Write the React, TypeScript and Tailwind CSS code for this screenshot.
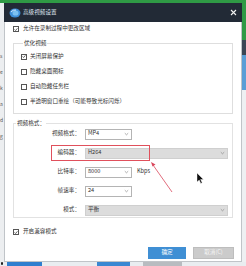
import React from 'react';

const font = { fontFamily: '"Noto Sans CJK SC", "Noto Sans", sans-serif' };

function Check({ checked }: { checked?: boolean }) {
    return (
        <span className="flex h-[6px] w-[6px] shrink-0 items-center justify-center border-[0.8px] border-[#555] bg-white">
            {checked && (
                <svg width="5" height="5" viewBox="0 0 5 5">
                    <path d="M0.7 2.4 L2 3.8 L4.3 1" fill="none" stroke="#333" strokeWidth="0.9" />
                </svg>
            )}
        </span>
    );
}

function CheckRow({ label, checked }: { label: string; checked?: boolean }) {
    return (
        <div className="flex h-[15px] items-center gap-[3px]">
            <Check checked={checked} />
            <span className="text-[5.6px] leading-none text-[#333]">{label}</span>
        </div>
    );
}

function Select({ value, width, muted }: { value: string; width: string; muted?: boolean }) {
    return (
        <div
            className={`flex h-[11px] items-center justify-between border-[0.8px] pr-[2px] pl-[2px] ${width} ${
                muted ? 'border-[#cfcfcf] bg-[#dcdcdc]' : 'border-[#b4b4b4] bg-white'
            }`}
        >
            <span className="text-[5.6px] leading-none text-[#333]">{value}</span>
            <svg width="5" height="4" viewBox="0 0 5 4">
                <path d="M0.8 1.2 L2.5 2.8 L4.2 1.2" fill="none" stroke="#8a8a8a" strokeWidth="0.7" />
            </svg>
        </div>
    );
}

function FieldRow({ label, children }: { label: string; children: React.ReactNode }) {
    return (
        <div className="relative flex h-[12px] items-center">
            <span className="w-[66px] text-right text-[5.6px] leading-none text-[#333]">{label}</span>
            <div className="ml-[5px] flex items-center">{children}</div>
        </div>
    );
}

export default function App() {
    return (
        <div className="relative flex h-[266px] w-[246px] flex-col overflow-hidden bg-[#e6e9ec]" style={font}>
            <div className="flex h-[262px]">
                {/* left strip */}
                <div className="flex w-[4px] flex-col">
                    <div className="h-[3px] bg-[#2f9a45]" />
                    <div className="flex flex-1 flex-col gap-[11px] bg-[#eceef0] pt-[50px] text-[5px] leading-none text-[#555]">
                        <span>s</span>
                        <span>e</span>
                        <span>k</span>
                        <span>a</span>
                        <span>d</span>
                        <span>g</span>
                    </div>
                </div>

                {/* dialog */}
                <div className="flex w-[238px] flex-col">
                    <div className="h-[3px] bg-[#2f9a45]" />
                    <div className="flex h-[19px] items-center bg-[#222a36] pr-[5px] pl-[5px]">
                        <svg width="12" height="10" viewBox="0 0 12 10">
                            <ellipse cx="6" cy="5" rx="5.5" ry="4.5" fill="#3f8fd8" />
                            <ellipse cx="6.5" cy="5" rx="3" ry="2.6" fill="#7cc0f0" />
                            <path d="M2 4 Q4 1.5 7 2" fill="none" stroke="#e8f4ff" strokeWidth="0.9" />
                        </svg>
                        <span className="ml-[2px] text-[5.6px] leading-none text-[#dfe5ee]">高级视频设置</span>
                        <svg className="ml-auto" width="7" height="7" viewBox="0 0 7 7">
                            <path d="M1 1 L6 6 M6 1 L1 6" stroke="#f2f2f2" strokeWidth="1.1" />
                        </svg>
                    </div>

                    <div className="flex h-[240px] flex-col border-x-[0.8px] border-b-[0.8px] border-[#c0c4c8] bg-white pt-[2px]">
                        <div className="flex h-[10px] items-center gap-[4px] pl-[8px]">
                            <Check checked />
                            <span className="text-[5.6px] leading-none text-[#333]">允许在录制过程中更改区域</span>
                        </div>

                        <fieldset className="mx-[8px] mt-[5px] border-[0.8px] border-[#dedede] pb-[4px] pl-[7px]">
                            <legend className="ml-[2px] px-[1px] text-[5.6px] leading-[8px] text-[#333]">优化视频</legend>
                            <div className="pt-[2px]">
                                <CheckRow label="关闭屏幕保护" checked />
                                <CheckRow label="隐藏桌面图标" />
                                <CheckRow label="自动隐藏任务栏" />
                                <CheckRow label="半透明窗口重绘（可能导致光标闪烁）" />
                            </div>
                        </fieldset>

                        <fieldset className="mx-[8px] mt-[5px] border-[0.8px] border-[#e2e2e2] pb-[1px]">
                            <legend className="ml-[2px] px-[1px] text-[5.6px] leading-[8px] text-[#333]">视频格式：</legend>
                            <div className="flex flex-col gap-[7px] pt-[1px]">
                                <FieldRow label="视频格式：">
                                    <Select value="MP4" width="w-[47px]" />
                                </FieldRow>
                                <FieldRow label="编码器：">
                                    <Select value="H264" width="w-[143px]" muted />
                                    <div className="absolute top-[-2px] left-[37px] h-[16px] w-[99px] border-[0.8px] border-[#e0505c]" />
                                </FieldRow>
                                <FieldRow label="比特率：">
                                    <Select value="8000" width="w-[47px]" />
                                    <span className="ml-[5px] text-[5.6px] leading-none text-[#333]">Kbps</span>
                                </FieldRow>
                                <FieldRow label="帧速率：">
                                    <Select value="24" width="w-[47px]" />
                                </FieldRow>
                                <FieldRow label="模式：">
                                    <Select value="平衡" width="w-[143px]" muted />
                                </FieldRow>
                            </div>
                        </fieldset>

                        <div className="mt-[9px] flex h-[10px] items-center gap-[4px] pl-[8px]">
                            <Check checked />
                            <span className="text-[5.6px] leading-none text-[#333]">开启兼容模式</span>
                        </div>

                        <div className="mt-[10px] flex justify-end gap-[7px] pr-[7px]">
                            <div className="flex h-[12px] w-[38px] items-center justify-center bg-[#3f8fd4] text-[5.6px] leading-none text-white">
                                确定
                            </div>
                            <div className="flex h-[12px] w-[41px] items-center justify-center border-[0.8px] border-[#bdbdbd] bg-[#cbcbcb] text-[5.6px] leading-none text-[#f4f4f4]">
                                取消(C)
                            </div>
                        </div>
                    </div>
                </div>

                {/* right strip */}
                <div className="flex w-[4px] flex-col">
                    <div className="h-[40px] bg-[#2f9a45]" />
                    <div className="h-[15px] bg-[#3b4654]" />
                    <div className="h-[35px] bg-[#5b9ed6]" />
                    <div className="flex-1 bg-[#eef0f2]" />
                </div>
            </div>

            {/* bottom strip */}
            <div className="flex h-[4px] bg-[#e9edf0]">
                <div className="ml-[1px] h-[3px] w-[2px] rounded-full bg-[#222]" />
                <div className="ml-[4px] w-[35px] bg-[#2f7fcf]" />
                <div className="ml-[55px] w-[33px] bg-[#3a88d2]" />
                <div className="ml-[13px] w-[39px] bg-[#b8bcc0]" />
            </div>

            {/* annotation arrow and mouse pointer */}
            <svg className="pointer-events-none absolute inset-0" width="246" height="266" viewBox="0 0 246 266">
                <path d="M172 192 L153 165" stroke="#d9475c" strokeWidth="0.8" />
                <path d="M151 162 L155.5 164.5 L152.5 166.5 Z" fill="#d9475c" />
                <path
                    d="M197 173 L197 182 L199.2 180 L200.8 183.4 L202.2 182.8 L200.6 179.5 L203.5 179.5 Z"
                    fill="#111"
                    stroke="#fff"
                    strokeWidth="0.4"
                />
            </svg>
        </div>
    );
}
